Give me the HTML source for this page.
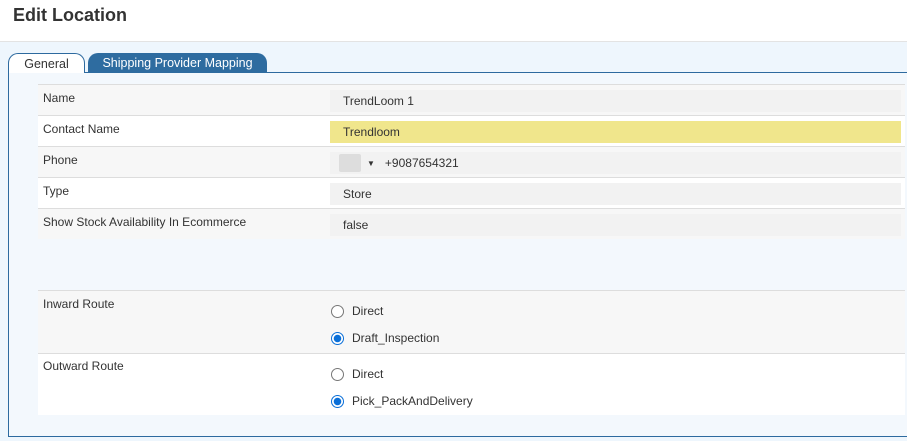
<!DOCTYPE html>
<html><head><style>
*{margin:0;padding:0;box-sizing:border-box}
body{width:907px;height:441px;overflow:hidden;background:#fff;font-family:"Segoe UI","Liberation Sans",sans-serif;font-size:12px;color:#333;position:relative}
.title{position:absolute;left:13px;top:5px;font-size:18px;font-weight:bold;color:#333}
.hdr{position:absolute;left:0;top:41px;width:907px;height:1px;background:#e3e3e3}
.bg{position:absolute;left:0;top:42px;width:907px;height:399px;background:#eef6fd}
.panel{position:absolute;left:8px;top:72px;width:905px;height:365px;border:1px solid #2d6a9f;background:#f3f8fd}
.tab{position:absolute;top:53px;height:20px;border-radius:10px 10px 0 0;font-size:12.5px;text-align:center;line-height:20px}
.t1{left:8px;width:77px;border:1px solid #2d6a9f;border-bottom:none;background:#fff;color:#333}
.t2{left:88px;width:179px;background:#2e6ca0;color:#fff}
.row{position:absolute;left:38px;width:867px;border-top:1px solid #ddd}
.lab{position:absolute;left:5px;top:6px}
.inp{position:absolute;left:292px;top:5px;width:571px;height:22px;background:#f2f2f2;padding-left:13px;line-height:22px}
.rad{position:absolute;left:293px;display:flex;align-items:center}
.rad i{width:13px;height:13px;border-radius:50%;border:1px solid #777;margin-right:8px;display:inline-block;background:#fff}
.rad i.on{border-color:#0a6fd8;background:radial-gradient(circle,#0a6fd8 3.5px,#fff 4px)}
</style></head><body>
<div class="title">Edit Location</div>
<div class="hdr"></div>
<div class="bg"></div>
<div class="panel"></div>
<div class="tab t1">General</div>
<div class="tab t2">Shipping Provider Mapping</div>

<div class="row" style="top:84px;height:31px;background:#f7f7f7"><span class="lab">Name</span><div class="inp">TrendLoom 1</div></div>
<div class="row" style="top:115px;height:31px;background:#fff"><span class="lab">Contact Name</span><div class="inp" style="background:#f0e68c">Trendloom</div></div>
<div class="row" style="top:146px;height:31px;background:#f7f7f7"><span class="lab">Phone</span><div class="inp" style="padding-left:9px"><span style="display:inline-block;width:22px;height:18px;background:#ddd;border-radius:2px;vertical-align:middle;margin-top:-2px"></span><span style="font-size:8px;margin:0 10px 0 6px;vertical-align:middle">▼</span>+9087654321</div></div>
<div class="row" style="top:177px;height:31px;background:#fff"><span class="lab">Type</span><div class="inp">Store</div></div>
<div class="row" style="top:208px;height:31px;background:#f7f7f7"><span class="lab">Show Stock Availability In Ecommerce</span><div class="inp">false</div></div>

<div class="row" style="top:290px;height:63px;background:#f7f7f7"><span class="lab" style="top:6px">Inward Route</span>
<div class="rad" style="top:13px"><i></i>Direct</div>
<div class="rad" style="top:40px"><i class="on"></i>Draft_Inspection</div></div>
<div class="row" style="top:353px;height:62px;background:#fff"><span class="lab" style="top:5px">Outward Route</span>
<div class="rad" style="top:13px"><i></i>Direct</div>
<div class="rad" style="top:40px"><i class="on"></i>Pick_PackAndDelivery</div></div>
</body></html>
